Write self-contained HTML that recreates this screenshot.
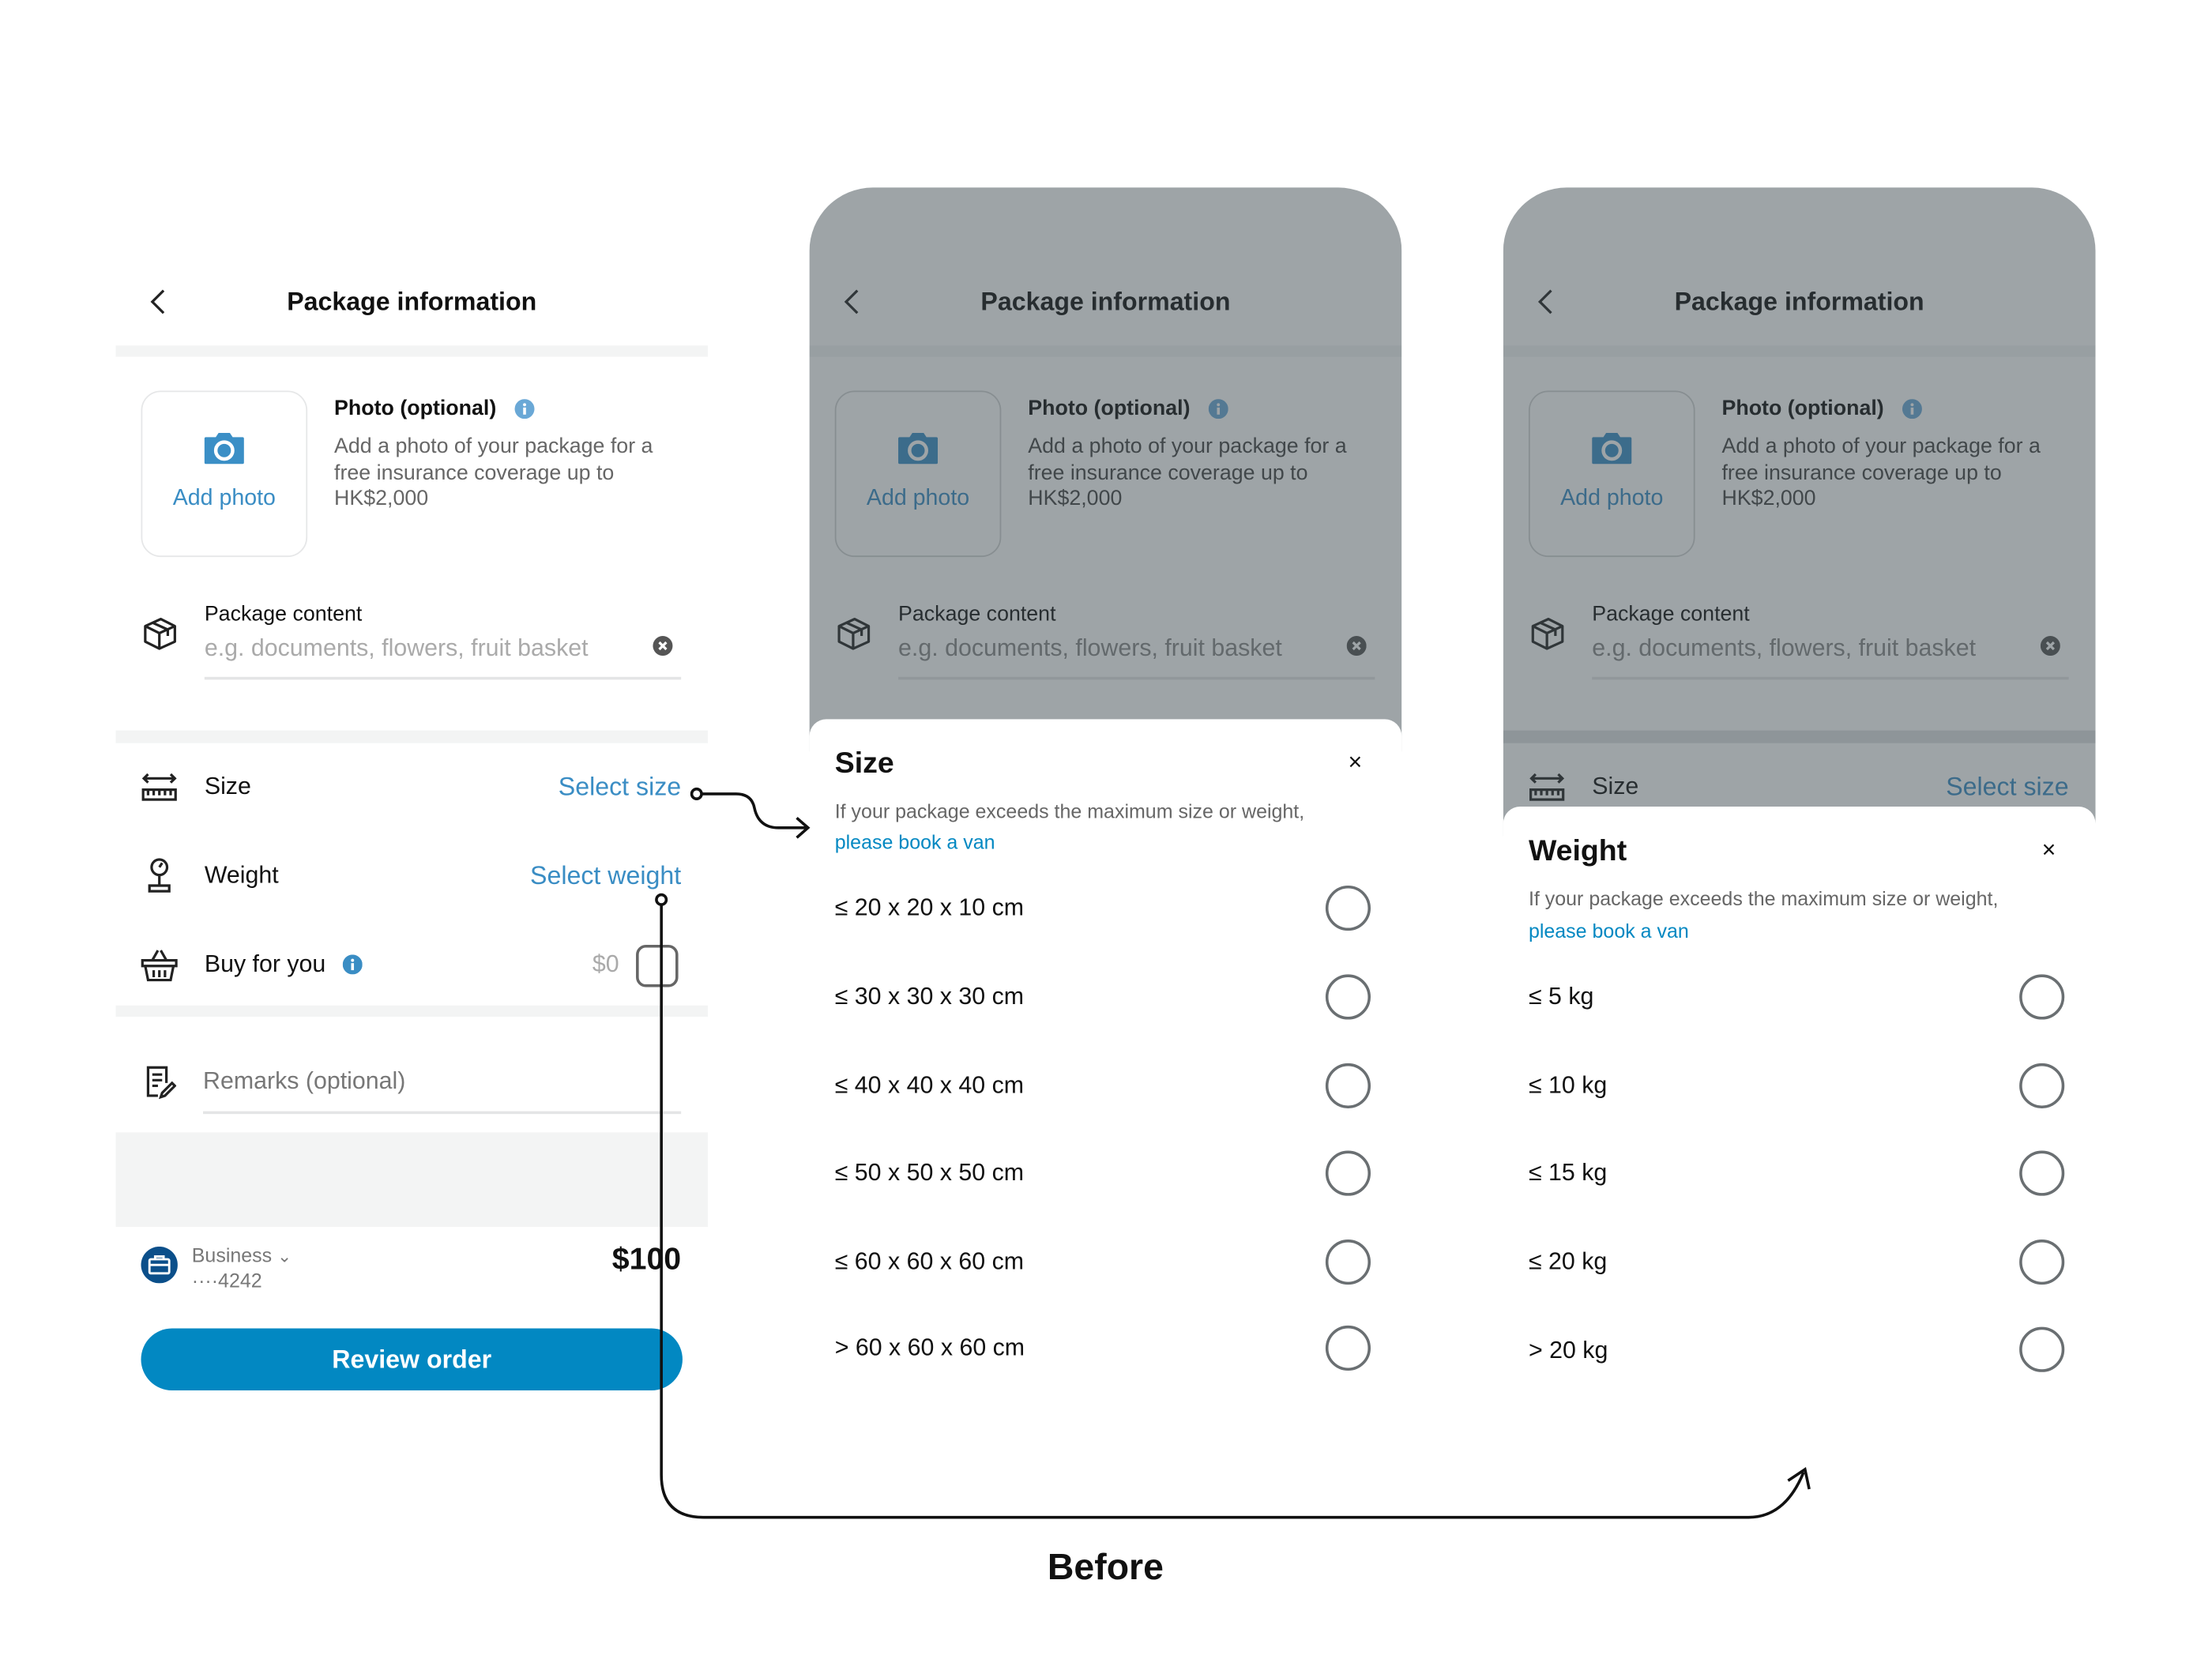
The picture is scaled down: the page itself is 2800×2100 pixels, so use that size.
<!DOCTYPE html>
<html><head><meta charset="utf-8"><style>
html,body{margin:0;padding:0;background:#fff;width:2800px;height:2100px;overflow:hidden}
#s{position:absolute;left:0;top:0;width:1568px;height:1176px;transform:scale(1.785);transform-origin:0 0;font-family:"Liberation Sans",sans-serif;color:#111}
.a{position:absolute}
.t{position:absolute;white-space:nowrap}
.panel{position:absolute;width:420px;overflow:hidden}
.bar{position:absolute;left:0;width:420px;background:#f3f4f4}
.ov{position:absolute;left:0;top:0;width:100%;height:100%;background:rgba(62,74,80,0.5)}
.sheet{position:absolute;width:420px;background:#fff;border-radius:12px 12px 0 0}
.opt{position:absolute;left:18px;font-size:17px;line-height:20px}
.rad{position:absolute;width:32px;height:32px;border:2.5px solid #6a6f72;border-radius:50%;box-sizing:border-box}
</style></head><body><div id="s">

<div class="panel" style="left:82px;top:0;height:1000px;background:#fff">
 <div class="a" style="left:0;top:0;width:420px;height:1000px">
  <svg class="a" style="left:22px;top:204px" width="16" height="20" viewBox="0 0 16 20"><path d="M12 2 L4 10 L12 18" fill="none" stroke="#222" stroke-width="1.8"/></svg>
  <div class="t" style="left:0;width:420px;text-align:center;top:203px;font-size:18px;font-weight:bold;line-height:22px">Package information</div>
  <div class="bar" style="top:245px;height:8px"></div>
  <div class="a" style="left:18px;top:277px;width:118px;height:118px;border:1px solid #e6e7e8;border-radius:14px;box-sizing:border-box"></div>
  <svg class="a" style="left:62px;top:306px" width="30" height="24" viewBox="0 0 30 24"><path d="M9 4 L11 1 H19 L21 4 H28 Q29 4 29 5 V22 Q29 23 28 23 H2 Q1 23 1 22 V5 Q1 4 2 4Z" fill="#3b8fc6"/><circle cx="15" cy="13.5" r="6" fill="none" stroke="#fff" stroke-width="2.5"/></svg>
  <div class="t" style="left:0;width:154px;text-align:center;top:344px;font-size:16px;color:#3a8dc4;line-height:20px">Add photo</div>
  <div class="t" style="left:155px;top:280px;font-size:15px;font-weight:bold;line-height:20px">Photo (optional)</div>
  <svg class="a" style="left:283px;top:283px" width="14" height="14" viewBox="0 0 14 14"><circle cx="7" cy="7" r="7" fill="#6aa8d6"/><rect x="6" y="6" width="2" height="5" fill="#fff"/><circle cx="7" cy="4" r="1.1" fill="#fff"/></svg>
  <div class="a" style="left:155px;top:308px;width:255px;font-size:15px;color:#666;line-height:18.5px">Add a photo of your package for a free insurance coverage up to HK$2,000</div>
  <svg class="a" style="left:19px;top:437px" width="25" height="25" viewBox="0 0 25 25"><g fill="none" stroke="#222" stroke-width="1.8" stroke-linejoin="round"><path d="M2 7 L13 2 L23 7 L23 18 L12 23 L2 18 Z"/><path d="M2 7 L12 12 L23 7 M12 12 V23 M7 4.5 L18 9.5 V14"/></g></svg>
  <div class="t" style="left:63px;top:427px;font-size:15px;line-height:18px">Package content</div>
  <div class="t" style="left:63px;top:450px;font-size:17px;color:#aaa;line-height:20px">e.g. documents, flowers, fruit basket</div>
  <svg class="a" style="left:381px;top:451px" width="14" height="14" viewBox="0 0 14 14"><circle cx="7" cy="7" r="7" fill="#555"/><path d="M4.5 4.5 L9.5 9.5 M9.5 4.5 L4.5 9.5" stroke="#fff" stroke-width="1.8"/></svg>
  <div class="a" style="left:63px;top:480px;width:338px;height:1.5px;background:#e4e5e6"></div>
  <div class="bar" style="top:518px;height:9px"></div>
  <svg class="a" style="left:18px;top:548px" width="26" height="21" viewBox="0 0 26 21"><g fill="none" stroke="#222" stroke-width="1.8"><path d="M2 4 H24 M5 1 L2 4 L5 7 M21 1 L24 4 L21 7"/><rect x="1.5" y="12" width="23" height="7"/><path d="M5 12 V16 M9 12 V16 M13 12 V16 M17 12 V16 M21 12 V16"/></g></svg>
  <div class="t" style="left:63px;top:548px;font-size:17px;line-height:20px">Size</div>
  <div class="t" style="right:19px;top:548px;font-size:18px;color:#3a8dc4;line-height:20px">Select size</div>
  <svg class="a" style="left:21px;top:608px" width="20" height="26" viewBox="0 0 20 26"><g fill="none" stroke="#222" stroke-width="1.8"><circle cx="10" cy="7" r="5.5"/><path d="M10 7 L12 4 M10 12.5 V20 M3 20 H17 V24 H3 Z"/></g></svg>
  <div class="t" style="left:63px;top:611px;font-size:17px;line-height:20px">Weight</div>
  <div class="t" style="right:19px;top:611px;font-size:18px;color:#3a8dc4;line-height:20px">Select weight</div>
  <svg class="a" style="left:18px;top:672px" width="26" height="25" viewBox="0 0 26 25"><g fill="none" stroke="#222" stroke-width="1.8"><path d="M1 9 H25 V13 H1 Z M3 13 L5 23 H21 L23 13 M8 9 L12 2 M18 9 L14 2 M9 16 V21 M13 16 V21 M17 16 V21"/></g></svg>
  <div class="t" style="left:63px;top:674px;font-size:17px;line-height:20px">Buy for you</div>
  <svg class="a" style="left:161px;top:677px" width="14" height="14" viewBox="0 0 14 14"><circle cx="7" cy="7" r="7" fill="#3a8dc4"/><rect x="6" y="6" width="2" height="5" fill="#fff"/><circle cx="7" cy="4" r="1.1" fill="#fff"/></svg>
  <div class="t" style="right:63px;top:674px;font-size:17px;color:#aaa;line-height:20px">$0</div>
  <div class="a" style="left:369px;top:670px;width:30px;height:30px;border:2px solid #666;border-radius:7px;box-sizing:border-box"></div>
  <div class="bar" style="top:713px;height:8px"></div>
  <svg class="a" style="left:21px;top:755px" width="22" height="25" viewBox="0 0 22 25"><g fill="none" stroke="#222" stroke-width="1.8"><path d="M15 13 V2 H2 V22 H9 M5 7 H12 M5 11 H12 M5 15 H9"/><path d="M11 23 L12 20 L19 13 L21 15 L14 22 Z"/></g></svg>
  <div class="t" style="left:62px;top:757px;font-size:17px;color:#777;line-height:20px">Remarks (optional)</div>
  <div class="a" style="left:62px;top:788px;width:339px;height:1.5px;background:#e4e5e6"></div>
  <div class="bar" style="top:803px;height:67px"></div>
  <svg class="a" style="left:18px;top:884px" width="26" height="26" viewBox="0 0 26 26"><circle cx="13" cy="13" r="13" fill="#0b4f8a"/><g fill="none" stroke="#fff" stroke-width="1.6"><rect x="6" y="9" width="14" height="10" rx="1"/><path d="M10 9 V7 H16 V9 M6 13 H20"/></g></svg>
  <div class="t" style="left:54px;top:882px;font-size:14px;color:#777;line-height:17px">Business <span style="font-size:12px">&#8964;</span></div>
  <div class="t" style="left:54px;top:900px;font-size:14px;color:#777;line-height:17px">····4242</div>
  <div class="t" style="right:19px;top:880px;font-size:22px;font-weight:bold;line-height:26px">$100</div>
  <div class="a" style="left:18px;top:942px;width:384px;height:44px;background:#0288c2;border-radius:22px;color:#fff;font-size:18px;font-weight:bold;text-align:center;line-height:44px">Review order</div>
 </div>
</div>

<div class="panel" style="left:574px;top:133px;height:400px;border-radius:45px 45px 0 0">
 <div class="a" style="left:0;top:-133px;width:420px;height:1000px;background:#fff">
  <svg class="a" style="left:22px;top:204px" width="16" height="20" viewBox="0 0 16 20"><path d="M12 2 L4 10 L12 18" fill="none" stroke="#222" stroke-width="1.8"/></svg>
  <div class="t" style="left:0;width:420px;text-align:center;top:203px;font-size:18px;font-weight:bold;line-height:22px">Package information</div>
  <div class="bar" style="top:245px;height:8px"></div>
  <div class="a" style="left:18px;top:277px;width:118px;height:118px;border:1px solid #d0d2d3;border-radius:14px;box-sizing:border-box"></div>
  <svg class="a" style="left:62px;top:306px" width="30" height="24" viewBox="0 0 30 24"><path d="M9 4 L11 1 H19 L21 4 H28 Q29 4 29 5 V22 Q29 23 28 23 H2 Q1 23 1 22 V5 Q1 4 2 4Z" fill="#3b8fc6"/><circle cx="15" cy="13.5" r="6" fill="none" stroke="#fff" stroke-width="2.5"/></svg>
  <div class="t" style="left:0;width:154px;text-align:center;top:344px;font-size:16px;color:#3a8dc4;line-height:20px">Add photo</div>
  <div class="t" style="left:155px;top:280px;font-size:15px;font-weight:bold;line-height:20px">Photo (optional)</div>
  <svg class="a" style="left:283px;top:283px" width="14" height="14" viewBox="0 0 14 14"><circle cx="7" cy="7" r="7" fill="#6aa8d6"/><rect x="6" y="6" width="2" height="5" fill="#fff"/><circle cx="7" cy="4" r="1.1" fill="#fff"/></svg>
  <div class="a" style="left:155px;top:308px;width:255px;font-size:15px;color:#444;line-height:18.5px">Add a photo of your package for a free insurance coverage up to HK$2,000</div>
  <svg class="a" style="left:19px;top:437px" width="25" height="25" viewBox="0 0 25 25"><g fill="none" stroke="#222" stroke-width="1.8" stroke-linejoin="round"><path d="M2 7 L13 2 L23 7 L23 18 L12 23 L2 18 Z"/><path d="M2 7 L12 12 L23 7 M12 12 V23 M7 4.5 L18 9.5 V14"/></g></svg>
  <div class="t" style="left:63px;top:427px;font-size:15px;line-height:18px">Package content</div>
  <div class="t" style="left:63px;top:450px;font-size:17px;color:#888;line-height:20px">e.g. documents, flowers, fruit basket</div>
  <svg class="a" style="left:381px;top:451px" width="14" height="14" viewBox="0 0 14 14"><circle cx="7" cy="7" r="7" fill="#555"/><path d="M4.5 4.5 L9.5 9.5 M9.5 4.5 L4.5 9.5" stroke="#fff" stroke-width="1.8"/></svg>
  <div class="a" style="left:63px;top:480px;width:338px;height:1.5px;background:#e4e5e6"></div>
  <div class="ov"></div>
 </div>
</div>
<div class="sheet" style="left:574px;top:510px;height:560px">
  <div class="t" style="left:18px;top:19px;font-size:21px;font-weight:bold;line-height:26px">Size</div>
  <div class="t" style="left:382px;top:21px;font-size:17px;line-height:20px">×</div>
  <div class="t" style="left:18px;top:56px;font-size:14px;color:#666;line-height:18px">If your package exceeds the maximum size or weight,</div>
  <div class="t" style="left:18px;top:78px;font-size:14px;color:#0288c2;line-height:18px">please book a van</div>
  <div class="opt" style="top:124px">≤ 20 x 20 x 10 cm</div><div class="rad" style="left:366px;top:118px"></div>
  <div class="opt" style="top:187px">≤ 30 x 30 x 30 cm</div><div class="rad" style="left:366px;top:181px"></div>
  <div class="opt" style="top:250px">≤ 40 x 40 x 40 cm</div><div class="rad" style="left:366px;top:244px"></div>
  <div class="opt" style="top:312px">≤ 50 x 50 x 50 cm</div><div class="rad" style="left:366px;top:306px"></div>
  <div class="opt" style="top:375px">≤ 60 x 60 x 60 cm</div><div class="rad" style="left:366px;top:369px"></div>
  <div class="opt" style="top:436px">&gt; 60 x 60 x 60 cm</div><div class="rad" style="left:366px;top:430px"></div>
</div>

<div class="panel" style="left:1066px;top:133px;height:460px;border-radius:45px 45px 0 0">
 <div class="a" style="left:0;top:-133px;width:420px;height:1000px;background:#fff">
  <svg class="a" style="left:22px;top:204px" width="16" height="20" viewBox="0 0 16 20"><path d="M12 2 L4 10 L12 18" fill="none" stroke="#222" stroke-width="1.8"/></svg>
  <div class="t" style="left:0;width:420px;text-align:center;top:203px;font-size:18px;font-weight:bold;line-height:22px">Package information</div>
  <div class="bar" style="top:245px;height:8px"></div>
  <div class="a" style="left:18px;top:277px;width:118px;height:118px;border:1px solid #d0d2d3;border-radius:14px;box-sizing:border-box"></div>
  <svg class="a" style="left:62px;top:306px" width="30" height="24" viewBox="0 0 30 24"><path d="M9 4 L11 1 H19 L21 4 H28 Q29 4 29 5 V22 Q29 23 28 23 H2 Q1 23 1 22 V5 Q1 4 2 4Z" fill="#3b8fc6"/><circle cx="15" cy="13.5" r="6" fill="none" stroke="#fff" stroke-width="2.5"/></svg>
  <div class="t" style="left:0;width:154px;text-align:center;top:344px;font-size:16px;color:#3a8dc4;line-height:20px">Add photo</div>
  <div class="t" style="left:155px;top:280px;font-size:15px;font-weight:bold;line-height:20px">Photo (optional)</div>
  <svg class="a" style="left:283px;top:283px" width="14" height="14" viewBox="0 0 14 14"><circle cx="7" cy="7" r="7" fill="#6aa8d6"/><rect x="6" y="6" width="2" height="5" fill="#fff"/><circle cx="7" cy="4" r="1.1" fill="#fff"/></svg>
  <div class="a" style="left:155px;top:308px;width:255px;font-size:15px;color:#444;line-height:18.5px">Add a photo of your package for a free insurance coverage up to HK$2,000</div>
  <svg class="a" style="left:19px;top:437px" width="25" height="25" viewBox="0 0 25 25"><g fill="none" stroke="#222" stroke-width="1.8" stroke-linejoin="round"><path d="M2 7 L13 2 L23 7 L23 18 L12 23 L2 18 Z"/><path d="M2 7 L12 12 L23 7 M12 12 V23 M7 4.5 L18 9.5 V14"/></g></svg>
  <div class="t" style="left:63px;top:427px;font-size:15px;line-height:18px">Package content</div>
  <div class="t" style="left:63px;top:450px;font-size:17px;color:#888;line-height:20px">e.g. documents, flowers, fruit basket</div>
  <svg class="a" style="left:381px;top:451px" width="14" height="14" viewBox="0 0 14 14"><circle cx="7" cy="7" r="7" fill="#555"/><path d="M4.5 4.5 L9.5 9.5 M9.5 4.5 L4.5 9.5" stroke="#fff" stroke-width="1.8"/></svg>
  <div class="a" style="left:63px;top:480px;width:338px;height:1.5px;background:#e4e5e6"></div>
  <div class="bar" style="top:518px;height:9px;background:#dfe1e2"></div>
  <svg class="a" style="left:18px;top:548px" width="26" height="21" viewBox="0 0 26 21"><g fill="none" stroke="#222" stroke-width="1.8"><path d="M2 4 H24 M5 1 L2 4 L5 7 M21 1 L24 4 L21 7"/><rect x="1.5" y="12" width="23" height="7"/><path d="M5 12 V16 M9 12 V16 M13 12 V16 M17 12 V16 M21 12 V16"/></g></svg>
  <div class="t" style="left:63px;top:548px;font-size:17px;line-height:20px">Size</div>
  <div class="t" style="right:19px;top:548px;font-size:18px;color:#3a8dc4;line-height:20px">Select size</div>
  <div class="ov"></div>
 </div>
</div>
<div class="sheet" style="left:1066px;top:572px;height:500px">
  <div class="t" style="left:18px;top:19px;font-size:21px;font-weight:bold;line-height:26px">Weight</div>
  <div class="t" style="left:382px;top:21px;font-size:17px;line-height:20px">×</div>
  <div class="t" style="left:18px;top:56px;font-size:14px;color:#666;line-height:18px">If your package exceeds the maximum size or weight,</div>
  <div class="t" style="left:18px;top:79px;font-size:14px;color:#0288c2;line-height:18px">please book a van</div>
  <div class="opt" style="top:125px">≤ 5 kg</div><div class="rad" style="left:366px;top:119px"></div>
  <div class="opt" style="top:188px">≤ 10 kg</div><div class="rad" style="left:366px;top:182px"></div>
  <div class="opt" style="top:250px">≤ 15 kg</div><div class="rad" style="left:366px;top:244px"></div>
  <div class="opt" style="top:313px">≤ 20 kg</div><div class="rad" style="left:366px;top:307px"></div>
  <div class="opt" style="top:376px">&gt; 20 kg</div><div class="rad" style="left:366px;top:369px"></div>
</div>

<svg class="a" style="left:0;top:0" width="1568" height="1176" viewBox="0 0 1568 1176">
 <g fill="none" stroke="#111" stroke-width="2">
  <circle cx="494" cy="563" r="3.5" fill="#fff"/>
  <path d="M498 563 H522 Q533 563 535 573 Q538 587 552 587 H572"/>
  <path d="M565 580 L573 587 L565 594"/>
  <circle cx="469" cy="638" r="3.5" fill="#fff"/>
  <path d="M469 642 V1046 Q469 1076 499 1076 H1240 Q1266 1076 1279 1044"/>
  <path d="M1268 1050 L1280 1042 L1283 1056"/>
 </g>
</svg>
<div class="t" style="left:0;width:1568px;text-align:center;top:1096px;font-size:26px;font-weight:bold;line-height:30px">Before</div>
</div></body></html>
